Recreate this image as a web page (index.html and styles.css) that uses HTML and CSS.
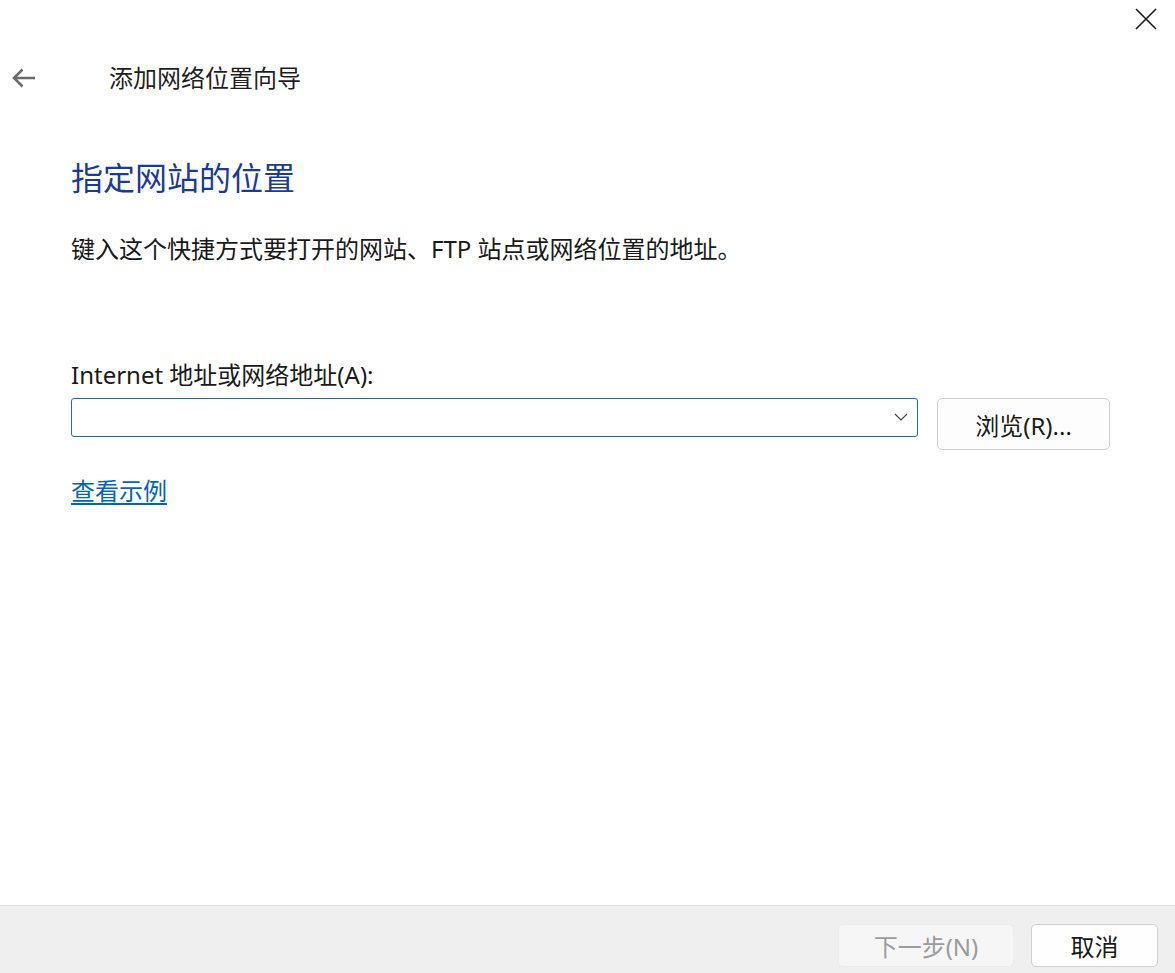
FILE: index.html
```html
<!DOCTYPE html>
<html>
  <head>
    <meta charset="utf-8" />
    <link rel="stylesheet" href="styles.css">
  </head>
  <body>
    <main class="wizard">
      <div class="titlebar">
        <button class="close-btn" aria-label="关闭">
          <svg width="22" height="22" viewBox="0 0 22 22">
            <path d="M1 1 L21 21 M21 1 L1 21" stroke="#1a1a1a" stroke-width="1.6" fill="none" />
          </svg>
        </button>
      </div>

      <div class="header">
        <button class="back-btn" aria-label="后退">
          <svg width="25" height="22" viewBox="0 0 25 22">
            <path d="M24 11 H3 M11.5 2.5 L3 11 L11.5 19.5" stroke="#6b6b6b" stroke-width="2.5" fill="none" />
          </svg>
        </button>
        <span class="wizard-title">添加网络位置向导</span>
      </div>

      <div class="content">
        <h1 class="heading">指定网站的位置</h1>
        <p class="desc">键入这个快捷方式要打开的网站、FTP 站点或网络位置的地址。</p>

        <label class="field-label" for="address">Internet 地址或网络地址(A):</label>
        <div class="field-row">
          <div class="combo">
            <input id="address" type="text" />
            <svg class="chevron" width="14" height="8" viewBox="0 0 14 8">
              <path d="M1 1 L7 7 L13 1" stroke="#444" stroke-width="1.1" fill="none" />
            </svg>
          </div>
          <button class="btn browse-btn">浏览(R)...</button>
        </div>

        <a class="example-link" href="#">查看示例</a>
      </div>

      <div class="footer">
        <button class="btn next-btn" disabled>下一步(N)</button>
        <button class="btn cancel-btn">取消</button>
      </div>
    </main>
  </body>
</html>
```

FILE: styles.css
```css
html, body {
  margin: 0;
  height: 100%;
}

body {
  font-family: "Noto Sans", "Noto Sans CJK SC", sans-serif;
  color: #1a1a1a;
  background: #ffffff;
}

.wizard {
  display: flex;
  flex-direction: column;
  width: 100vw;
  height: 100vh;
}

button {
  font-family: inherit;
}

.titlebar {
  display: flex;
  justify-content: flex-end;
  align-items: center;
  height: 38px;
  padding-right: 18px;
}

.close-btn {
  border: none;
  background: none;
  padding: 0;
  width: 22px;
  height: 22px;
  display: flex;
}

.header {
  display: flex;
  align-items: center;
  height: 80px;
}

.back-btn {
  border: none;
  background: none;
  padding: 0;
  margin-left: 11px;
  display: flex;
}

.wizard-title {
  margin-left: 73px;
  font-size: 24px;
  line-height: 34px;
  color: #1f1f1f;
}

.content {
  display: flex;
  flex-direction: column;
  align-items: flex-start;
  padding: 0 65px 0 71px;
}

.heading {
  margin: 38px 0 0;
  font-size: 32px;
  line-height: 44px;
  font-weight: normal;
  color: #1a3c98;
}

.desc {
  margin: 32px 0 0;
  font-size: 24px;
  line-height: 34px;
}

.field-label {
  margin-top: 92px;
  font-size: 24px;
  line-height: 34px;
}

.field-row {
  display: flex;
  align-items: flex-start;
  gap: 19px;
  margin-top: 6px;
}

.combo {
  position: relative;
  width: 847px;
  height: 39px;
}

.combo input {
  box-sizing: border-box;
  width: 100%;
  height: 100%;
  border: 1px solid #1d6fb3;
  border-radius: 3px;
  padding: 0 40px 0 8px;
  font-size: 22px;
  font-family: inherit;
  outline: none;
}

.chevron {
  position: absolute;
  right: 10px;
  top: 15px;
}

.btn {
  box-sizing: border-box;
  font-size: 24px;
  border-radius: 5px;
  border: 1px solid #d2d2d2;
  background: #fdfdfd;
  color: #1a1a1a;
  padding: 0;
}

.browse-btn {
  width: 173px;
  height: 52px;
}

.example-link {
  margin-top: 24px;
  font-size: 24px;
  line-height: 34px;
  color: #0067c0;
  text-decoration: underline;
  text-underline-offset: 3px;
}

.footer {
  margin-top: auto;
  display: flex;
  justify-content: flex-end;
  gap: 17px;
  height: 68px;
  box-sizing: border-box;
  padding: 18px 17px 0 0;
  background: #efefef;
  border-top: 1px solid #e2e2e2;
}

.next-btn {
  width: 176px;
  height: 43px;
  background: #f6f6f6;
  border-color: #ececec;
  color: #9b9b9b;
}

.cancel-btn {
  width: 127px;
  height: 43px;
  background: #fefefe;
  border-color: #cfcfcf;
}
```
